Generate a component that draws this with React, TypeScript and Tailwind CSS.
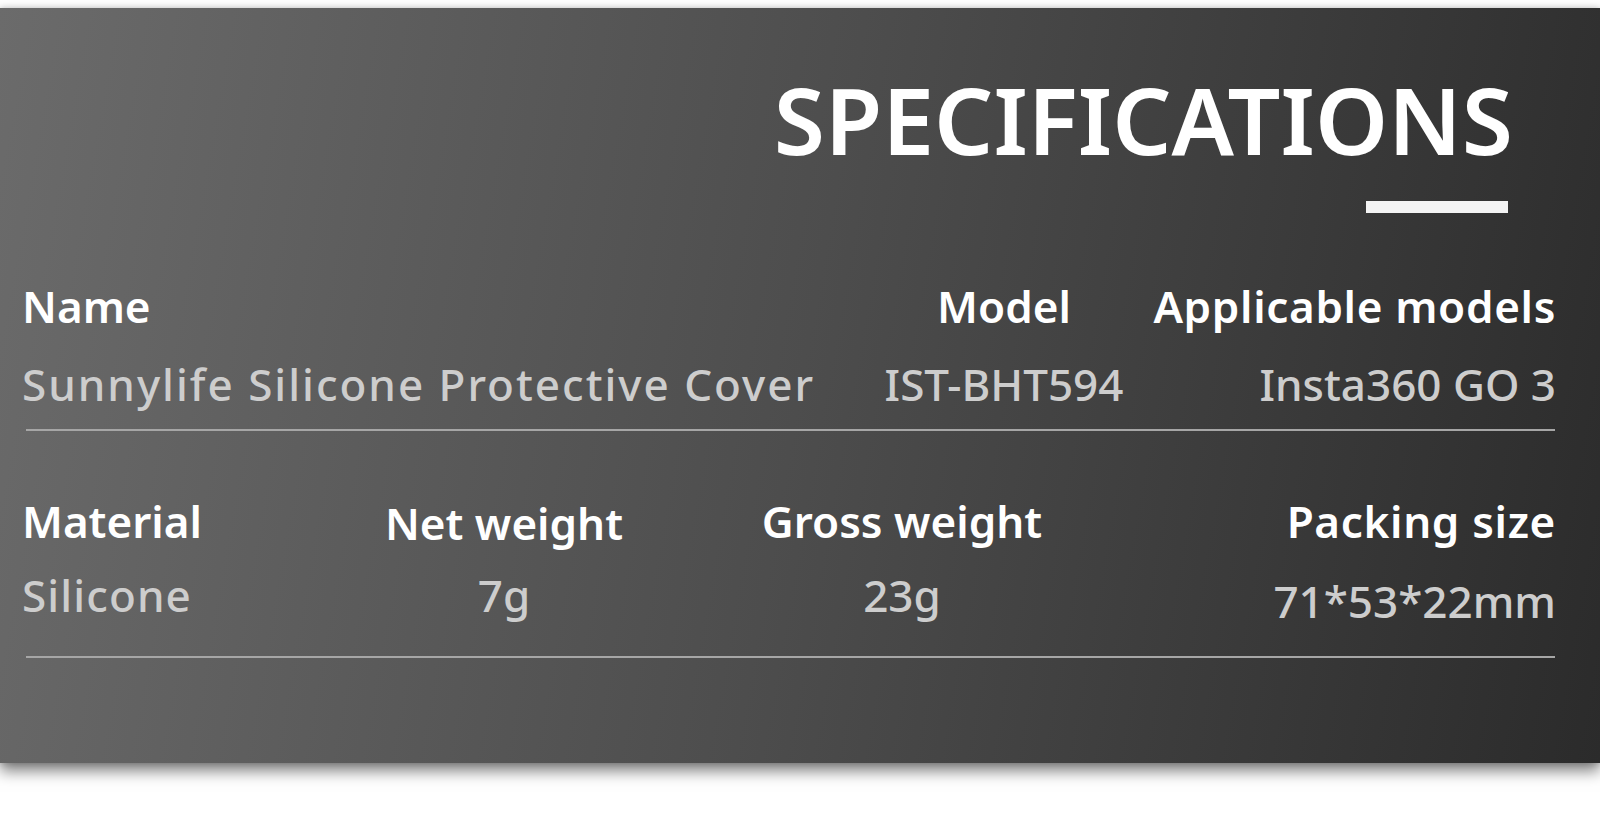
import React from "react";

type Spec = {
  label: string;
  value: string;
  align: "start" | "center" | "end";
  labelClass?: string;
  valueClass?: string;
};

const alignClass = {
  start: "items-start",
  center: "items-center",
  end: "items-end",
};

const SpecCell: React.FC<Spec & { className?: string }> = ({
  label,
  value,
  align,
  labelClass = "",
  valueClass = "mt-[34px]",
  className = "",
}) => (
  <div className={`flex flex-col ${alignClass[align]} ${className}`}>
    <span className={`text-[44px] leading-none font-semibold whitespace-nowrap text-white ${labelClass}`}>{label}</span>
    <span className={`text-[44px] leading-none font-medium whitespace-nowrap text-[#cdcdcd] ${valueClass}`}>
      {value}
    </span>
  </div>
);

const Divider = ({ className = "" }: { className?: string }) => (
  <div className={`ml-[4px] mr-[1px] h-[2px] bg-[#a6a6a6] ${className}`} />
);

export default function App() {
  return (
    <div className="min-h-[832px] w-full bg-white pt-[8px] font-['Noto_Sans','Open_Sans',sans-serif]">
      <div className="h-[755px] w-full bg-[linear-gradient(100deg,#6b6b6b_0%,#4d4d4d_50%,#2b2b2b_100%)] shadow-[0_0_6px_rgba(0,0,0,0.18),0_8px_14px_rgba(0,0,0,0.5)]">
        {/* heading */}
        <div className="flex flex-col items-end pt-[65px] pr-[87px]">
          <h1 className="text-[93px] leading-none font-semibold text-white">SPECIFICATIONS</h1>
          <div className="mt-[35px] mr-[5px] h-[12px] w-[142px] bg-[#f4f4f4]" />
        </div>

        <div className="pl-[22px] pr-[44px]">
          {/* first row */}
          <div className="mt-[71px] grid grid-cols-[1fr_260px_422px]">
            <SpecCell
              label="Name"
              value="Sunnylife Silicone Protective Cover"
              align="start"
              valueClass="mt-[34px] tracking-[0.045em]"
            />
            <SpecCell label="Model" value="IST-BHT594" align="center" />
            <SpecCell
              label="Applicable models"
              value="Insta360 GO 3"
              align="end"
              labelClass="tracking-[0.015em]"
            />
          </div>
          <Divider className="mt-[23px]" />

          {/* second row */}
          <div className="mt-[68px] flex">
            <SpecCell
              label="Material"
              value="Silicone"
              align="start"
              valueClass="mt-[30px] tracking-[0.025em]"
              className="w-[332px]"
            />
            <SpecCell
              label="Net weight"
              value="7g"
              align="center"
              labelClass="mt-[2px]"
              valueClass="mt-[28px]"
              className="w-[300px]"
            />
            <SpecCell
              label="Gross weight"
              value="23g"
              align="center"
              valueClass="mt-[30px]"
              className="ml-[98px] w-[300px]"
            />
            <SpecCell
              label="Packing size"
              value="71*53*22mm"
              align="end"
              labelClass="tracking-[0.015em]"
              valueClass="mt-[36px]"
              className="flex-1"
            />
          </div>
          <Divider className="mt-[33px]" />
        </div>
      </div>
    </div>
  );
}
